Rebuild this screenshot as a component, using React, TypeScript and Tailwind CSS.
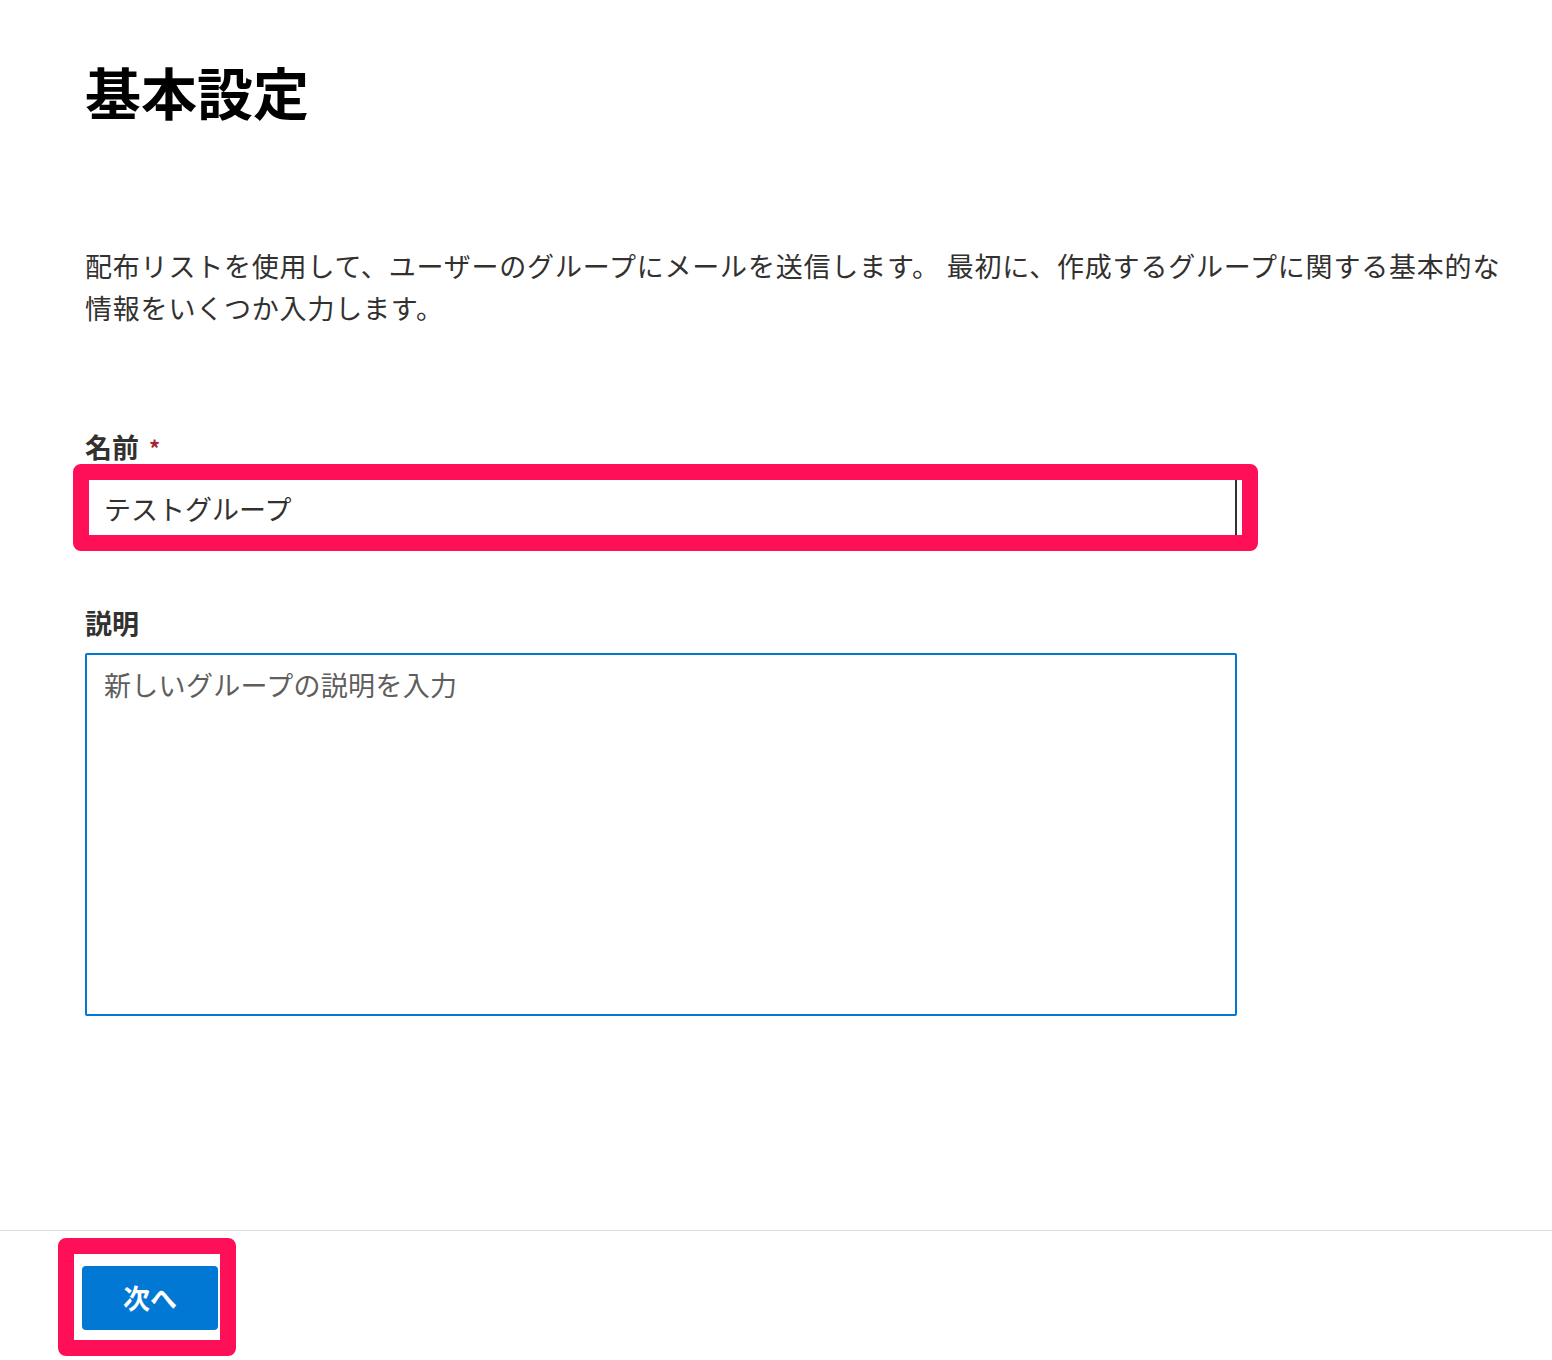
export default function App() {
  return (
    <div
      className="flex h-[1360px] flex-col overflow-hidden bg-white text-[#323130]"
      style={{ fontFamily: '"Noto Sans CJK JP", "Noto Sans", sans-serif' }}
    >
      {/* --- Form body --- */}
      <main className="flex-1 pl-[85px] pr-[40px]">
        <h1 className="mt-[57px] text-[56px] font-bold leading-[68px] text-black">基本設定</h1>

        <p className="mt-[120px] max-w-[1430px] text-[27px] leading-[42px] tracking-[0.8px]">
          配布リストを使用して、ユーザーのグループにメールを送信します。 最初に、作成するグループに関する基本的な情報をいくつか入力します。
        </p>

        {/* Name */}
        <label className="mt-[100px] flex items-center text-[27px] font-bold leading-[36px]">
          名前
          <span className="ml-[10px] text-[22px] text-[#a4262c]">*</span>
        </label>
        <div className="relative mt-[13px] w-[1152px]">
          <input
            type="text"
            defaultValue="テストグループ"
            className="h-[60px] w-full rounded-[2px] border-2 border-[#323130] bg-white pl-[17px] text-[27px] text-[#323130] outline-none"
          />
          {/* highlight frame */}
          <div className="pointer-events-none absolute -left-[12px] -top-[14px] h-[87px] w-[1185px] rounded-[8px] border-[16px] border-[#ff0f58]" />
        </div>

        {/* Description */}
        <label className="mt-[67px] block text-[27px] font-bold leading-[36px]">説明</label>
        <textarea
          placeholder="新しいグループの説明を入力"
          className="mt-[12px] block h-[363px] w-[1152px] resize-none rounded-[2px] border-2 border-[#0078d4] px-[17px] pt-[12px] text-[27px] leading-[36px] tracking-[0.3px] outline-none placeholder:text-[#605e5c]"
        />
      </main>

      {/* --- Footer --- */}
      <footer className="h-[130px] shrink-0 border-t border-[#e1dfdd] pl-[82px] pt-[35px]">
        <div className="relative w-[136px]">
          <button className="flex h-[64px] w-[136px] items-center justify-center rounded-[4px] bg-[#0078d4] text-[27px] font-bold text-white">
            次へ
          </button>
          <div className="pointer-events-none absolute -left-[24px] -top-[28px] h-[118px] w-[178px] rounded-[8px] border-[16px] border-[#ff0f58]" />
        </div>
      </footer>
    </div>
  );
}
